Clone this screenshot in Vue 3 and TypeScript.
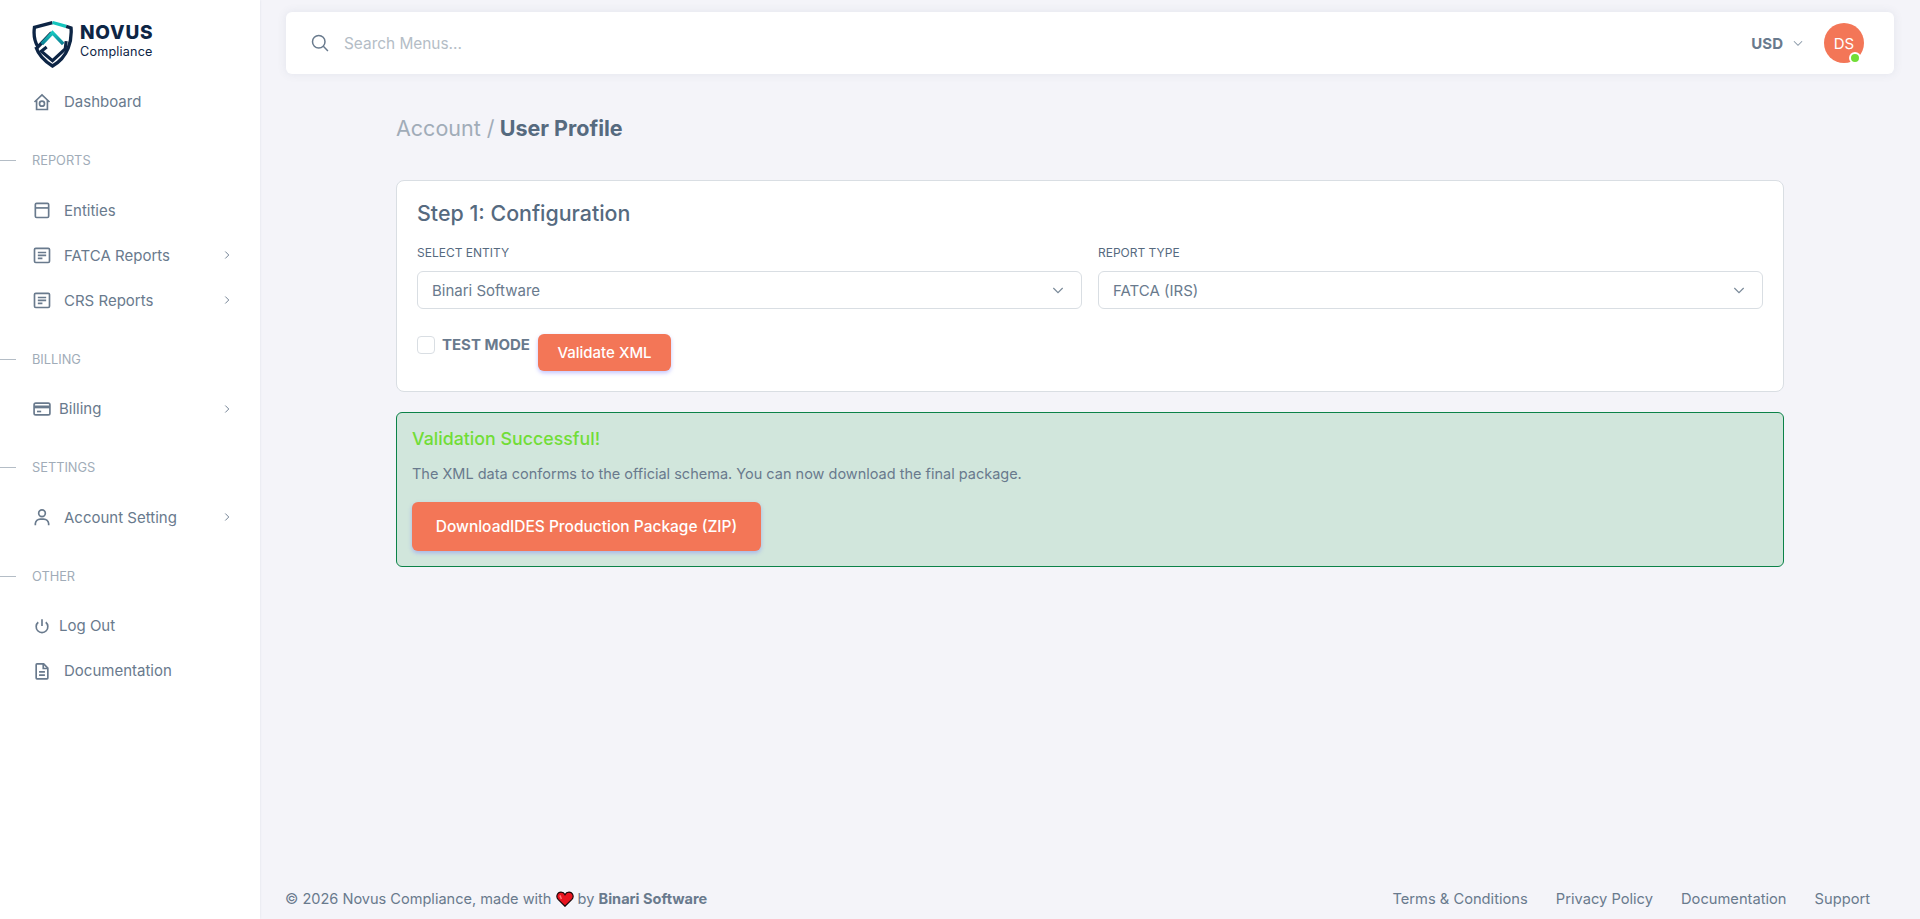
<script setup lang="ts">
interface MenuItem {
  label: string;
  icon: string;
  arrow?: boolean;
  tight?: boolean;
}
interface MenuGroup {
  title?: string;
  items: MenuItem[];
}

const menu: MenuGroup[] = [
  { items: [{ label: "Dashboard", icon: "home" }] },
  {
    title: "Reports",
    items: [
      { label: "Entities", icon: "window" },
      { label: "FATCA Reports", icon: "detail", arrow: true },
      { label: "CRS Reports", icon: "detail", arrow: true },
    ],
  },
  { title: "Billing", items: [{ label: "Billing", icon: "card", arrow: true, tight: true }] },
  { title: "Settings", items: [{ label: "Account Setting", icon: "user", arrow: true }] },
  {
    title: "Other",
    items: [
      { label: "Log Out", icon: "power", tight: true },
      { label: "Documentation", icon: "file" },
    ],
  },
];

const footerLinks = ["Terms & Conditions", "Privacy Policy", "Documentation", "Support"];
</script>

<template>
  <div class="layout">
    <aside class="sidebar">
      <div class="brand">
        <svg class="brand-mark" viewBox="0 0 42 48" fill="none">
          <defs>
            <linearGradient id="teal" x1="0" y1="0" x2="0" y2="1">
              <stop offset="0" stop-color="#16c7c0" />
              <stop offset="1" stop-color="#0e7f93" />
            </linearGradient>
          </defs>
          <path d="M21 2 L2.5 7 C1.5 14 2.5 21 6 27 L20 12.5" stroke="#0d2545" stroke-width="3.4" />
          <path d="M21 2 L35 6" stroke="#14c4bd" stroke-width="3.4" />
          <path d="M35 6 L40 7.5 C41 20 37.5 37 21 46.5 C12 41 7 36 4 27" stroke="#0d2545" stroke-width="3.4" />
          <path d="M10 24 L21 12.5 L32 24" stroke="url(#teal)" stroke-width="3.6" />
          <path d="M15 27 L9.5 31.5 L21 41 L34 29 L35 21" stroke="#0d2545" stroke-width="3.2" />
        </svg>
        <div class="brand-text">
          <span class="brand-name">NOVUS</span>
          <span class="brand-sub">Compliance</span>
        </div>
      </div>

      <nav class="menu">
        <template v-for="group in menu" :key="group.title ?? 'top'">
          <div v-if="group.title" class="menu-header">{{ group.title }}</div>
          <a v-for="item in group.items" :key="item.label" class="menu-item">
            <svg class="menu-icon" :class="{ tight: item.tight }" viewBox="0 0 24 24" fill="none" stroke="currentColor" stroke-width="2">
              <template v-if="item.icon === 'home'">
                <path d="M3 12 L12 3.5 L21 12" />
                <path d="M5.5 10 V21 H18.5 V10" />
                <circle cx="12" cy="14" r="3" />
              </template>
              <template v-else-if="item.icon === 'window'">
                <rect x="4" y="4" width="16" height="17" rx="1.5" />
                <path d="M4 9.5 H20" />
              </template>
              <template v-else-if="item.icon === 'detail'">
                <rect x="3" y="4" width="18" height="17" rx="1.5" />
                <path d="M7 9 H17 M7 12.5 H17 M7 16 H12.5" />
              </template>
              <template v-else-if="item.icon === 'card'">
                <rect x="2.5" y="5" width="19" height="14" rx="2" />
                <path d="M2.5 9.5 H21.5" stroke-width="3.4" />
                <path d="M6 15 H11" />
              </template>
              <template v-else-if="item.icon === 'user'">
                <circle cx="12" cy="7.5" r="4" />
                <path d="M4 22 V20 A6 6 0 0 1 10 14.5 H14 A6 6 0 0 1 20 20 V22" />
              </template>
              <template v-else-if="item.icon === 'power'">
                <path d="M12 4 V12" />
                <path d="M7.5 7.5 A7 7 0 1 0 16.5 7.5" />
              </template>
              <template v-else>
                <path d="M6 3.5 H14 L19 8.5 V20.5 A1 1 0 0 1 18 21.5 H6 A1 1 0 0 1 5 20.5 V4.5 A1 1 0 0 1 6 3.5 Z" />
                <path d="M13.5 3.5 V9 H19 M8.5 13 H15.5 M8.5 17 H15.5" />
              </template>
            </svg>
            <span class="menu-label">{{ item.label }}</span>
            <svg v-if="item.arrow" class="menu-arrow" viewBox="0 0 24 24" fill="none" stroke="currentColor" stroke-width="1.6">
              <path d="M9 6 L15 12 L9 18" />
            </svg>
          </a>
        </template>
      </nav>
    </aside>

    <div class="page">
      <header class="navbar">
        <svg class="search-icon" viewBox="0 0 24 24" fill="none" stroke="currentColor" stroke-width="1.8">
          <circle cx="10.5" cy="10.5" r="7.5" />
          <path d="M16 16 L21.5 21.5" />
        </svg>
        <span class="search-text">Search Menus...</span>
        <span class="currency">USD</span>
        <svg class="currency-caret" viewBox="0 0 24 24" fill="none" stroke="currentColor" stroke-width="1.8">
          <path d="M5 9 L12 16 L19 9" />
        </svg>
        <div class="avatar">
          DS
          <span class="avatar-status"></span>
        </div>
      </header>

      <main class="content">
        <h4 class="page-title"><span>Account /</span> User Profile</h4>

        <section class="card">
          <h5 class="card-title">Step 1: Configuration</h5>
          <div class="form-row">
            <div class="field">
              <label>Select Entity</label>
              <div class="select">
                <span>Binari Software</span>
                <svg viewBox="0 0 24 24" fill="none" stroke="currentColor" stroke-width="1.8"><path d="M5 9 L12 16 L19 9" /></svg>
              </div>
            </div>
            <div class="field">
              <label>Report Type</label>
              <div class="select">
                <span>FATCA (IRS)</span>
                <svg viewBox="0 0 24 24" fill="none" stroke="currentColor" stroke-width="1.8"><path d="M5 9 L12 16 L19 9" /></svg>
              </div>
            </div>
          </div>
          <div class="actions">
            <span class="checkbox"></span>
            <span class="check-label">TEST MODE</span>
            <button class="btn btn-validate">Validate XML</button>
          </div>
        </section>

        <section class="alert">
          <h5 class="alert-title">Validation Successful!</h5>
          <p>The XML data conforms to the official schema. You can now download the final package.</p>
          <button class="btn btn-download">DownloadIDES Production Package (ZIP)</button>
        </section>
      </main>

      <footer class="footer">
        <div class="copy">
          © 2026 Novus Compliance, made with
          <svg class="heart" viewBox="0 0 24 22">
            <path d="M12 21 L2.5 11.5 C-1 7.5 1.5 1.5 6.5 1.5 C9 1.5 11 3 12 5 C13 3 15 1.5 17.5 1.5 C22.5 1.5 25 7.5 21.5 11.5 Z" fill="#e8141f" stroke="#1a0508" stroke-width="1.6" />
            <path d="M5 6 L7 11" stroke="#ff7b7b" stroke-width="2" fill="none" />
          </svg>
          by <strong>Binari Software</strong>
        </div>
        <div class="footer-links">
          <a v-for="link in footerLinks" :key="link">{{ link }}</a>
        </div>
      </footer>
    </div>
  </div>
</template>

<style scoped>
.layout {
  display: flex;
  min-height: 919px;
  background: #f4f4f9;
  color: #697a8d;
  font-family: Inter, "Noto Sans", sans-serif;
  font-size: 15px;
}

.sidebar {
  width: 260px;
  flex: none;
  background: #fff;
  box-shadow: 0 0 2px rgba(67, 89, 113, 0.12);
}

.brand {
  display: flex;
  align-items: flex-start;
  gap: 7px;
  height: 48px;
  margin: 20px 0 11px 32px;
}

.brand-mark {
  width: 41px;
  height: 48px;
}

.brand-text {
  display: flex;
  flex-direction: column;
  padding-top: 5px;
  color: #0d2545;
}

.brand-name {
  font-size: 19px;
  font-weight: 800;
  line-height: 16px;
  letter-spacing: 0.8px;
}

.brand-sub {
  margin-top: 4.4px;
  font-size: 12.6px;
  line-height: 14px;
  letter-spacing: 0.2px;
}

.menu-item {
  display: flex;
  align-items: center;
  height: 45px;
  padding-left: 32px;
  padding-right: 26px;
}

.menu-icon {
  width: 20px;
  height: 20px;
  margin-right: 12px;
}

.menu-icon.tight {
  margin-right: 7px;
}

.menu-label {
  flex: 1;
}

.menu-arrow {
  width: 14px;
  height: 14px;
}

.menu-header {
  position: relative;
  height: 63.6px;
  padding: 28px 0 0 32px;
  box-sizing: border-box;
  color: #a1acb8;
  font-size: 12.8px;
  line-height: 18px;
  text-transform: uppercase;
}

.menu-header::before {
  content: "";
  position: absolute;
  left: 0;
  top: 36px;
  width: 16px;
  height: 1px;
  background: #b4bdc6;
}

.page {
  flex: 1;
  display: flex;
  flex-direction: column;
  min-width: 0;
}

.navbar {
  display: flex;
  align-items: center;
  height: 62px;
  margin: 12px 26px 0;
  padding: 0 30px 0 24px;
  background: #fff;
  border-radius: 6px;
  box-shadow: 0 0 10px rgba(67, 89, 113, 0.1);
}

.search-icon {
  width: 20px;
  height: 20px;
  margin-right: 14px;
}

.search-text {
  flex: 1;
  color: #b4bdc6;
  font-size: 15.4px;
}

.currency {
  font-size: 15px;
  font-weight: 700;
}

.currency-caret {
  width: 14px;
  height: 14px;
  margin: 0 19px 0 8px;
  color: #8a99a8;
}

.avatar {
  position: relative;
  display: flex;
  align-items: center;
  justify-content: center;
  width: 40px;
  height: 40px;
  border-radius: 50%;
  background: #f37657;
  color: #fff;
  font-size: 15px;
}

.avatar-status {
  position: absolute;
  right: 3px;
  bottom: -1px;
  width: 8px;
  height: 8px;
  border: 2px solid #fff;
  border-radius: 50%;
  background: #71dd37;
}

.content {
  flex: 1;
  width: 100%;
  max-width: 1440px;
  margin: 0 auto;
  padding: 0 26px;
  box-sizing: border-box;
}

.page-title {
  margin: 42px 0 40px;
  color: #566a7f;
  font-size: 21.5px;
  line-height: 24px;
  font-weight: 700;
}

.page-title span {
  color: #a1acb8;
  font-weight: 400;
}

.card {
  padding: 20px;
  background: #fff;
  border: 1px solid #d9dee3;
  border-radius: 8px;
}

.card-title {
  margin: -1px 0 20px;
  color: #566a7f;
  font-size: 21.4px;
  line-height: 26px;
  font-weight: 500;
}

.form-row {
  display: grid;
  grid-template-columns: 1fr 1fr;
  gap: 16px;
}

.field label {
  display: block;
  margin-bottom: 11px;
  color: #566a7f;
  font-size: 12px;
  line-height: 14px;
  font-weight: 400;
  text-transform: uppercase;
}

.select {
  display: flex;
  align-items: center;
  justify-content: space-between;
  height: 38px;
  padding: 0 15px 0 14px;
  box-sizing: border-box;
  border: 1px solid #d9dee3;
  border-radius: 6px;
}

.select svg {
  width: 16px;
  height: 16px;
  color: #7a8a99;
}

.actions {
  display: flex;
  align-items: flex-start;
  margin-top: 25px;
}

.checkbox {
  width: 18px;
  height: 18px;
  margin-top: 2px;
  box-sizing: border-box;
  border: 1px solid #d9dee3;
  border-radius: 4px;
}

.check-label {
  margin: 2px 8px 0 7px;
  font-size: 15px;
  line-height: 18px;
  font-weight: 700;
}

.btn {
  border: none;
  color: #fff;
  font-family: inherit;
  font-weight: 500;
  background: #f37657;
  border-radius: 6px;
  box-shadow: 0 2px 4px rgba(105, 108, 255, 0.4);
}

.btn-validate {
  width: 133px;
  height: 37px;
  font-size: 15px;
}

.alert {
  margin-top: 20px;
  padding: 15px 15px 15px;
  background: #d1e6dc;
  border: 1px solid #0b8248;
  border-radius: 6px;
}

.alert-title {
  margin: 0 0 13px;
  color: #71dd37;
  font-size: 17.8px;
  line-height: 22px;
  font-weight: 500;
}

.alert p {
  margin: 0 0 17px;
  font-size: 14.5px;
  line-height: 22px;
}

.btn-download {
  display: block;
  width: 349px;
  height: 49px;
  font-size: 15.5px;
}

.footer {
  display: flex;
  align-items: center;
  justify-content: space-between;
  height: 40px;
  padding: 0 50px 1px 25px;
  box-sizing: border-box;
  font-size: 14.7px;
}

.copy {
  font-size: 14.55px;
}

.heart {
  width: 18px;
  height: 16px;
  vertical-align: -3px;
}

.footer-links {
  display: flex;
  gap: 28px;
}
</style>
